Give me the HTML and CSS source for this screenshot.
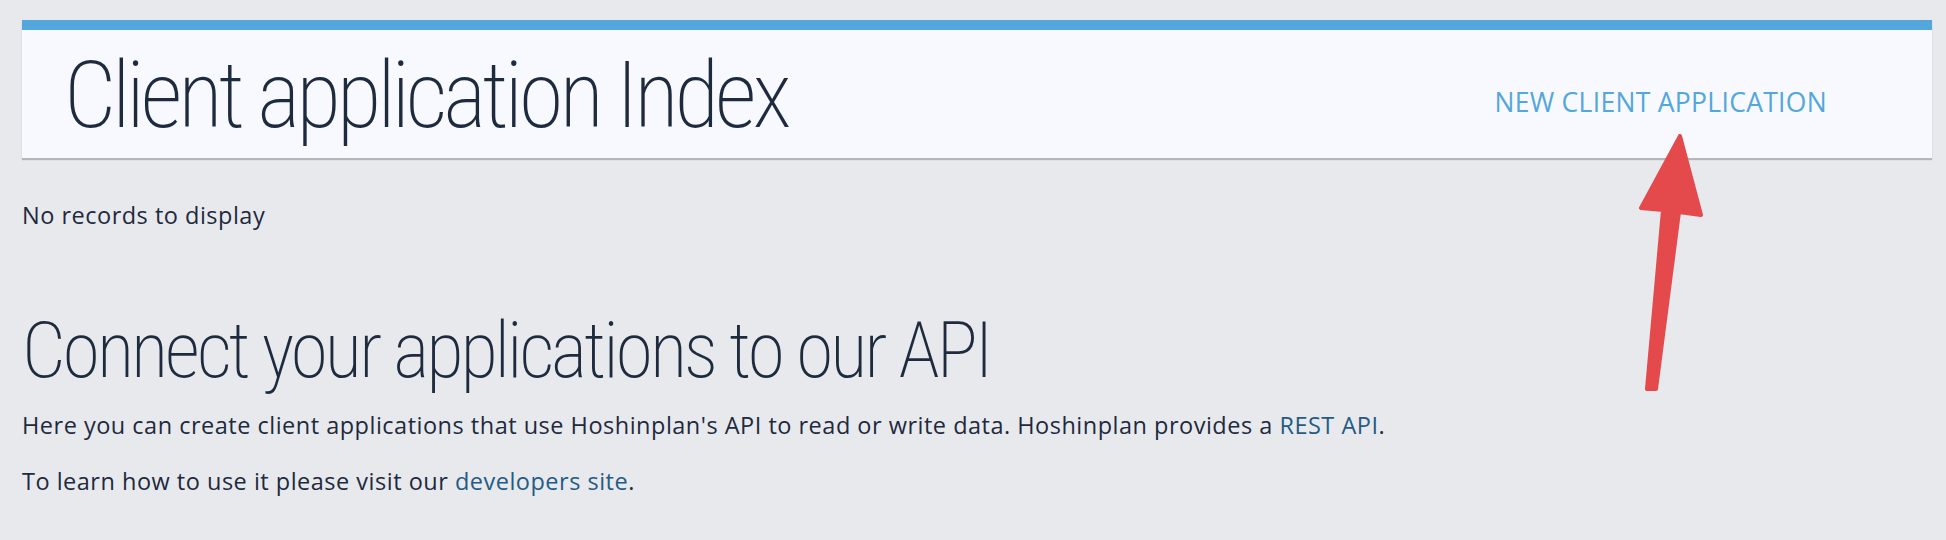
FILE: index.html
```html
<!DOCTYPE html>
<html lang="en">
<head>
<meta charset="utf-8">
<title>Client application Index</title>
<link rel="stylesheet" href="styles.css">
</head>
<body>
<div class="page">
  <header class="card">
    <h1 class="card-title">Client application Index</h1>
    <a class="new-link" href="#">NEW CLIENT APPLICATION</a>
  </header>
  <main class="content">
    <p class="empty">No records to display</p>
    <h2 class="section-title">Connect your applications to our API</h2>
    <p class="text">Here you can create client applications that use Hoshinplan's API to read or write data. Hoshinplan provides a <a class="link" href="#">REST API</a>.</p>
    <p class="text">To learn how to use it please visit our <a class="link" href="#">developers site</a>.</p>
  </main>
  <svg class="arrow" width="80" height="270" viewBox="1630 130 80 270" xmlns="http://www.w3.org/2000/svg">
    <polygon points="1680,136 1641,208 1663,210 1647,389 1656,389 1679,212 1701,215" fill="#e4494c" stroke="#e4494c" stroke-width="4" stroke-linejoin="round"/>
  </svg>
</div>
</body>
</html>
```

FILE: styles.css
```css
html, body {
  margin: 0;
  padding: 0;
}
body {
  background: #e8e9ed;
  color: #1e2a3d;
  font-family: "Open Sans", "Lato", sans-serif;
}
.page {
  position: relative;
  padding: 20px 14px 40px 22px;
}
.card {
  display: flex;
  justify-content: space-between;
  align-items: flex-start;
  height: 128px;
  background: #f7f9fe;
  border-top: 10px solid #53a7dc;
  box-shadow: 0 2px 1px rgba(0, 0, 0, 0.22);
  padding: 0 105px 0 42px;
}
.card-title {
  margin: 0;
  padding-top: 20px;
  font-family: "Roboto", sans-serif;
  font-stretch: 75%;
  font-weight: 200;
  font-size: 92px;
  line-height: 92px;
  letter-spacing: -4.17px;
  color: #1e2a3d;
}
.new-link {
  margin-top: 57px;
  font-size: 26.5px;
  line-height: 30px;
  letter-spacing: 0.3px;
  color: #53a7dc;
  text-decoration: none;
}
.content {
  padding-top: 42px;
}
.empty {
  margin: 0;
  font-size: 23.5px;
  line-height: 30px;
  letter-spacing: 0.5px;
}
.section-title {
  margin: 83px 0 20px 0;
  font-family: "Roboto", sans-serif;
  font-stretch: 75%;
  font-weight: 200;
  font-size: 77px;
  line-height: 77px;
  letter-spacing: -3.11px;
  color: #1e2a3d;
}
.text {
  margin: 0 0 26px 0;
  font-size: 23.5px;
  line-height: 30px;
  letter-spacing: 0.5px;
}
.link {
  color: #245b85;
  text-decoration: none;
}
.arrow {
  position: absolute;
  left: 1630px;
  top: 130px;
}
```
